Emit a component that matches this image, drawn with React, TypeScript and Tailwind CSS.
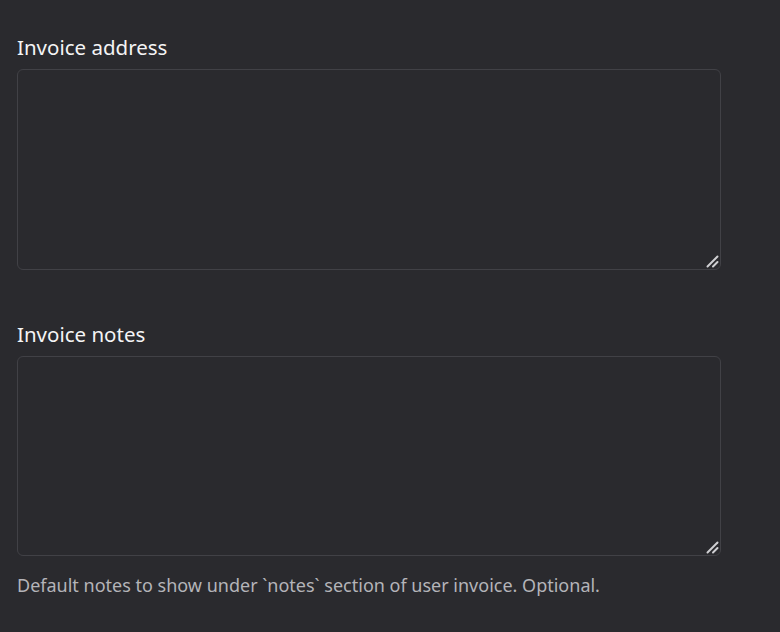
function Field({ h }: { h: string }) {
  return (
    <div className="relative mt-[7px]">
      <textarea className={`block ${h} w-full resize-none rounded-[6px] border border-[#414146] bg-[#2a2a2e] p-2 text-white outline-none`} />
      {/* resize grip */}
      <svg
        className="pointer-events-none absolute bottom-[2px] right-[2px]"
        width="14"
        height="14"
        viewBox="0 0 14 14"
      >
        <path d="M2.5 12.5 L12.5 2.5" stroke="#cfcfd2" strokeWidth="2" strokeLinecap="round" />
        <path d="M8 12.5 L12.5 8" stroke="#cfcfd2" strokeWidth="2" strokeLinecap="round" />
      </svg>
    </div>
  );
}

export default function App() {
  return (
    <div
      className="min-h-[632px] w-full bg-[#2a2a2e] pl-[17px] pr-[59px] pt-[33px]"
      style={{ fontFamily: '"Noto Sans", "Open Sans", sans-serif' }}
    >
      <div className="flex flex-col">
        <label className="text-[20.5px] leading-[29px] text-[#f4f4f5]">Invoice address</label>
        <Field h="h-[201px]" />
      </div>
      <div className="mt-[50px] flex flex-col">
        <label className="text-[20.5px] leading-[29px] text-[#f4f4f5]">Invoice notes</label>
        <Field h="h-[200px]" />
        <p className="mt-[17px] text-[18px] leading-[25px] text-[#b4b4b9]">
          Default notes to show under `notes` section of user invoice. Optional.
        </p>
      </div>
    </div>
  );
}
